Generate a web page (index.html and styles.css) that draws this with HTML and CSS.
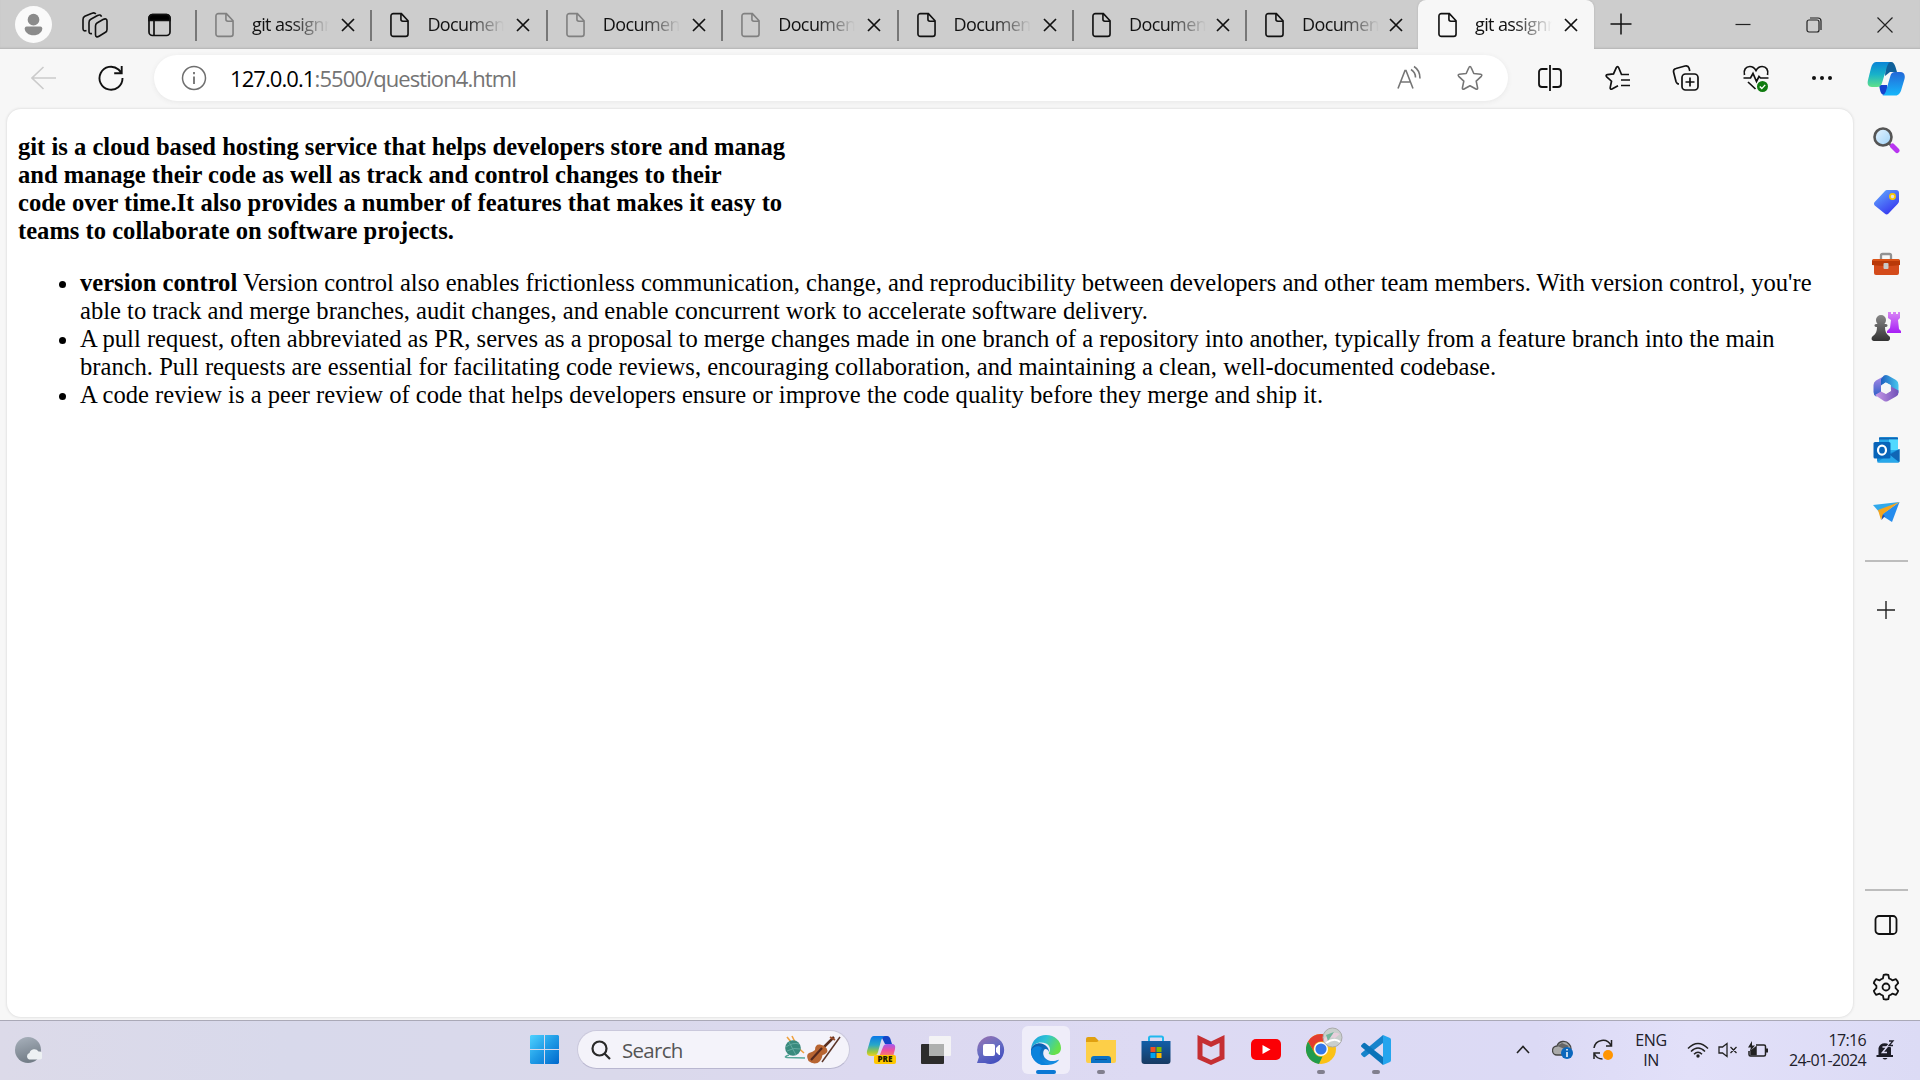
FILE: index.html
```html
<!DOCTYPE html>
<html lang="en">
<head>
<meta charset="utf-8">
<title>git assignment</title>
<link rel="stylesheet" href="styles.css">
</head>
<body>
<svg class="defs" width="0" height="0">
  <symbol id="doc" viewBox="0 0 20 26"><path d="M3.5 1H12l7 7.5v14a2.5 2.500 0 0 1-2.500 2.500h-13A2.500 2.500 0 0 1 1 22.500v-19A2.500 2.500 0 0 1 3.500 1zM11.500 1v6a2 2 0 0 0 2 2H19" fill="none" stroke="currentColor" stroke-width="1.700"/></symbol>
  <symbol id="x" viewBox="0 0 14 14"><path d="M1 1l12 12M13 1L1 13" fill="none" stroke="currentColor" stroke-width="1.700"/></symbol>
</svg>
<div class="desktop">
  <header class="tabstrip">
    <div class="lead">
      <div class="avatar"><svg width="37" height="37" viewBox="0 0 38 38"><circle cx="19" cy="14" r="6" fill="#8b8b8b"/><path d="M12 21h14a2 2 0 0 1 2 2c0 4-4 7-9 7s-9-3-9-7a2 2 0 0 1 2-2z" fill="#8b8b8b"/></svg></div>
      <svg class="workspaces" width="26" height="26" viewBox="0 0 26 26" fill="none" stroke="#111" stroke-width="1.600"><path d="M15 11l6-3.500c2.500-1.300 4-.5 4 1.500v8.500c0 1.500-.5 2.200-1.500 2.800l-6.500 4c-2 1.200-3.500.5-3.500-1.500V14c0-1.500.3-2.300 1.500-3z"/><path d="M10 21.500c-2 .5-3-.2-3-2v-9c0-1.500.5-2.500 1.800-3.200L15.500 3.500c2-1 3.500-.5 4 1.300"/><path d="M4.500 18.500C2.200 19.500 1 18.500 1 16.500V7.500C1 6 1.500 5 2.800 4.300L10 1.300c1.700-.8 3-.5 3.800.7"/></svg>
      <svg width="24" height="24" viewBox="0 0 24 24" fill="none" stroke="#111" stroke-width="1.700"><rect x="1" y="1.500" width="21" height="21" rx="3.500"/><path d="M1 5a4 4 0 0 1 3.500-3.500h14A4 4 0 0 1 22 5v2.500H1z" fill="#000"/><path d="M6 7v15"/></svg>
    </div>
    <div class="tab dim"><svg class="doc"><use href="#doc"/></svg><span>git assignment</span><svg class="close"><use href="#x"/></svg></div>
    <div class="tab"><svg class="doc"><use href="#doc"/></svg><span>Document</span><svg class="close"><use href="#x"/></svg></div>
    <div class="tab dim"><svg class="doc"><use href="#doc"/></svg><span>Document</span><svg class="close"><use href="#x"/></svg></div>
    <div class="tab dim"><svg class="doc"><use href="#doc"/></svg><span>Document</span><svg class="close"><use href="#x"/></svg></div>
    <div class="tab"><svg class="doc"><use href="#doc"/></svg><span>Document</span><svg class="close"><use href="#x"/></svg></div>
    <div class="tab narrow"><svg class="doc"><use href="#doc"/></svg><span>Document</span><svg class="close"><use href="#x"/></svg></div>
    <div class="tab narrow"><svg class="doc"><use href="#doc"/></svg><span>Document</span><svg class="close"><use href="#x"/></svg></div>
    <div class="tab active"><svg class="doc"><use href="#doc"/></svg><span>git assignment</span><svg class="close"><use href="#x"/></svg></div>
    <svg class="newtab" width="22" height="22" viewBox="0 0 22 22"><path d="M11 0.500v21M0.500 11h21" stroke="#111" stroke-width="1.500"/></svg>
    <div class="winctl">
      <div><svg width="16" height="16"><path d="M0.500 7.500h15" stroke="#222" stroke-width="1.200"/></svg></div>
      <div><svg width="16" height="16" fill="none" stroke="#222" stroke-width="1.200"><rect x="1" y="3" width="12" height="12" rx="2"/><path d="M4 1h8c2 0 3 1 3 3v9"/></svg></div>
      <div><svg width="16" height="16" viewBox="0 0 16 16"><path d="M.5 .5l15 15M15.500 .5l-15 15" stroke="#222" stroke-width="1.200"/></svg></div>
    </div>
  </header>

  <nav class="toolbar">
    <svg class="back" width="26" height="24" viewBox="0 0 26 24" fill="none" stroke="#cbcbcb" stroke-width="1.600"><path d="M25 12H1M12.500 1L1 12l11.500 11"/></svg>
    <svg class="reload" width="26" height="26" viewBox="0 0 26 26" fill="none" stroke="#111" stroke-width="1.900"><path d="M24.500 13A11.500 11.500 0 1 1 20.500 4.500L23.700 8M23.700 1v7.200h-7.500"/></svg>
    <div class="address">
      <svg width="26" height="26" viewBox="0 0 26 26" fill="none" stroke="#6f6f6f" stroke-width="1.500"><circle cx="13" cy="13" r="11.500"/><path d="M13 11.500V19M13 7v2.200" stroke-width="1.800"/></svg>
      <span class="url"><b>127.0.0.1</b>:5500/question4.html</span>
      <svg class="read" width="26" height="26" viewBox="0 0 26 26" fill="none" stroke="#757575" stroke-width="1.600"><path d="M1 23.500L8 5.500h1l7 18M4 17h9.500M14 4.500c3 1.800 4.500 4.500 4.500 8M17 1.500c4 2.500 6 6.500 6 12"/></svg>
      <svg width="26" height="26" viewBox="0 0 26 26" fill="none" stroke="#757575" stroke-width="1.600" stroke-linejoin="round"><path d="M13 1.500c.6 0 .9.500 1.100 1l2.700 6 6.900.8c1.200.2 1.400 1.200.6 2l-5.100 4.800 1.400 6.700c.2 1.200-.7 1.800-1.700 1.200L13 20.800 7.100 24c-1 .6-1.900 0-1.700-1.200l1.400-6.700-5.100-4.800c-.8-.8-.6-1.800.6-2l6.900-.8 2.700-6c.2-.5.500-1 1.100-1z"/></svg>
    </div>
    <div class="tools">
      <svg width="26" height="26" viewBox="0 0 26 26" fill="none" stroke="#111" stroke-width="1.800"><path d="M10.500 4H5a3 3 0 0 0-3 3v12a3 3 0 0 0 3 3h5.500M15.500 4H21a3 3 0 0 1 3 3v12a3 3 0 0 1-3 3h-5.500M13 0v26"/></svg>
      <svg width="26" height="26" viewBox="0 0 26 26" fill="none" stroke="#111" stroke-width="1.700"><path d="M24 9.500h-7.500l-2.800-6.800c-.6-1.400-1.800-1.400-2.400 0L8.500 8.900l-6.200.8c-1.300.2-1.600 1.200-.6 2.200l4.800 4.300-1.300 6.500c-.2 1.300.7 1.900 1.800 1.300L13 20.800M16 15h9M16 20.500h9"/></svg>
      <svg width="28" height="28" viewBox="0 0 28 28" fill="none" stroke="#111" stroke-width="1.700"><rect x="10" y="10" width="16" height="16" rx="3.500"/><path d="M18 13.500v9M13.500 18h9M7 20c-1.800 0-2.500-1-3-2.500L1.700 8.500C1.200 6.500 2 5 4 4.500l9-2.500c2-.5 3.500.3 4 2l.8 3"/></svg>
      <svg width="28" height="28" viewBox="0 0 28 28" fill="none" stroke="#111" stroke-width="1.700"><path d="M2.500 11C1.200 5.500 4 2.500 7.800 2.500c2.700 0 4.800 1.500 6.200 4 1.400-2.500 3.500-4 6.200-4 3.800 0 6.600 3 5.300 8.500M1.500 14h7L11 9.500l3.500 8 2.500-5 1.500 1.500h8M6 18l7.500 7"/><circle cx="20.500" cy="22.500" r="5.500" fill="#107c10" stroke="none"/><path d="M17.800 22.600l2 2 3.400-3.700" stroke="#fff" stroke-width="1.400"/></svg>
      <svg width="22" height="6" viewBox="0 0 22 6" fill="#111"><circle cx="3" cy="3" r="2"/><circle cx="11" cy="3" r="2"/><circle cx="19" cy="3" r="2"/></svg>
    </div>
    <svg class="copilot" width="38" height="35" viewBox="0 0 38 35">
      <defs><linearGradient id="ca" x1="0" y1="0" x2="0" y2="1"><stop offset="0" stop-color="#0a84d6"/><stop offset=".5" stop-color="#18b2c9"/><stop offset="1" stop-color="#5fe08a"/></linearGradient><linearGradient id="cb" x1="0" y1="0" x2="0" y2="1"><stop offset="0" stop-color="#2368d8"/><stop offset="1" stop-color="#16b7fb"/></linearGradient></defs>
      <path d="M19 1h5c2.500 0 3.500 2 4.500 5l1.500 5h-7l-5 4z" fill="#10609a"/>
      <path d="M12 24h8l1 10h-3c-3 0-4.500-2-5-5z" fill="#1443ce"/>
      <path d="M9 1h14c-2 1-3 4-4 8l-4 13c-.6 2-2 4-5 4H5c-4 0-5-3-4-7L4 7c1-3.500 2.500-6 5-6z" fill="url(#ca)"/>
      <path d="M28 11h5c4 0 5.500 3 4.500 7l-3 10c-1 4-3 6.500-6 6.500H15c3-.5 4-4 5-8l3.500-12c.7-2 2-3.500 4.500-3.500z" fill="url(#cb)"/>
    </svg>
  </nav>

  <div class="body">
    <main class="page">
      <p class="intro">git is a cloud based hosting service that helps developers store and manag<br>and manage their code as well as track and control changes to their<br>code over time.It also provides a number of features that makes it easy to<br>teams to collaborate on software projects.</p>
      <ul>
        <li><b>version control</b> Version control also enables frictionless communication, change, and reproducibility between developers and other team members. With version control, you're<br>able to track and merge branches, audit changes, and enable concurrent work to accelerate software delivery.</li>
        <li>A pull request, often abbreviated as PR, serves as a proposal to merge changes made in one branch of a repository into another, typically from a feature branch into the main<br>branch. Pull requests are essential for facilitating code reviews, encouraging collaboration, and maintaining a clean, well-documented codebase.</li>
        <li>A code review is a peer review of code that helps developers ensure or improve the code quality before they merge and ship it.</li>
      </ul>
    </main>
    <aside class="sidebar">
      <div><svg width="28" height="28" viewBox="0 0 28 28"><defs><linearGradient id="lens" x2="1" y2="1"><stop stop-color="#e6f4ff"/><stop offset="1" stop-color="#9ed2f8"/></linearGradient></defs><path d="M16 17l4 3" stroke="#666" stroke-width="2.500"/><path d="M20.500 20l4.500 4.500" stroke="#b836f0" stroke-width="5" stroke-linecap="round"/><circle cx="11" cy="11" r="8.500" fill="url(#lens)" stroke="#555" stroke-width="2.600"/></svg></div>
      <div><svg width="28" height="28" viewBox="0 0 28 28"><defs><linearGradient id="tag" x2=".7" y2="1"><stop stop-color="#65b0ff"/><stop offset="1" stop-color="#3535ef"/></linearGradient></defs><path d="M15 2h9c2 0 3 1 3 3v8c0 1-.5 2-1.200 2.700l-9.500 10c-1 1-2.400 1-3.300 0L2.700 17.500c-1-1-1-2.400 0-3.400L13 3c.6-.7 1.200-1 2-1z" fill="url(#tag)"/><circle cx="20.500" cy="8.500" r="2.600" fill="#dde" stroke="#fac800" stroke-width="1.700"/></svg></div>
      <div><svg width="30" height="26" viewBox="0 0 30 26"><path d="M10 8V4.500Q10 3 11.500 3h7Q20 3 20 4.500V8" fill="none" stroke="#929292" stroke-width="2.300"/><path d="M3 12h25v10q0 2-2 2H5q-2 0-2-2z" fill="#d44b1b"/><path d="M3 8h24q2 0 2 2v4q-13 2-28 0v-4q0-2 2-2z" fill="#b93908"/><path d="M2 9h26" stroke="#e75d1c" stroke-width="1.500"/><rect x="12.500" y="12" width="5" height="6" rx="1" fill="#c9c9c9"/></svg></div>
      <div><svg width="30" height="30" viewBox="0 0 30 30"><defs><linearGradient id="rook" x2="0" y2="1"><stop stop-color="#d886f5"/><stop offset="1" stop-color="#a61df5"/></linearGradient><linearGradient id="pawn" x2="0" y2="1"><stop stop-color="#888"/><stop offset="1" stop-color="#333"/></linearGradient></defs><path d="M17 1h3v2h2V1h3v2h2V1h2v6l-2 2 1 9 2 2v2H16v-2l3-3 1-8-3-2z" fill="url(#rook)"/><path d="M5 9a5 5 0 1 1 10 0c0 2-1 3-1.500 4H15c2 0 2 3 0 3h-1c0 4 1 7 4 9 2 1 1 5-1 5H3c-3 0-3-4-1-5 3-2 4-5 4-9H5c-2 0-2-3 0-3h1.500C6 12 5 11 5 9z" fill="url(#pawn)"/></svg></div>
      <div><svg width="28" height="28" viewBox="0 0 28 28"><defs><linearGradient id="m1" x2="1" y2="0"><stop stop-color="#1e5fc0"/><stop offset="1" stop-color="#48c8ee"/></linearGradient><linearGradient id="m2" x2="0" y2="1"><stop stop-color="#b68be8"/><stop offset="1" stop-color="#2c60c8"/></linearGradient><linearGradient id="m3" x2="1" y2="0"><stop stop-color="#c99ae8"/><stop offset="1" stop-color="#7050b8"/></linearGradient></defs><path d="M14 1L4 6.500Q1.500 8 1.500 11v7q0 3 2.500 4.500L9 20V9z" fill="url(#m2)"/><path d="M12 1.500Q14 .3 16 1.500L24 6q2.500 1.500 2.500 5v8l-8-4v-4L13.500 8.500 9 12V5z" fill="url(#m1)"/><path d="M3 21l6-3.500 5 2.500 5-3v-4.500l7.500 4v2q0 3-2.500 4l-8 4.500q-2 1-4 0z" fill="url(#m3)"/><path d="M14 8.500l4.800 2.700v5.600L14 19.500l-4.800-2.700v-5.600z" fill="#f7f7f7"/></svg></div>
      <div><svg width="28" height="28" viewBox="0 0 28 28"><rect x="7" y="1" width="19" height="17" rx="1.500" fill="#28a8ea"/><path d="M7 2.500h19" stroke="#1264b4" stroke-width="2"/><path d="M17 3.500h9V14h-9z" fill="#50d9ff"/><path d="M5 14l11 4 11.500-5v12q0 1.500-1.500 1.500H7q-2 0-2-2z" fill="#148edb"/><path d="M17 19l10.500-6v13z" fill="#1066b5"/><path d="M5 26.500h22L17 18z" fill="#28a8ea"/><rect x="1.500" y="6" width="17" height="16.500" rx="1.500" fill="#0864b9"/><ellipse cx="10" cy="14.200" rx="4" ry="4.500" fill="none" stroke="#fff" stroke-width="2.200"/></svg></div>
      <div><svg width="28" height="22" viewBox="0 0 28 22"><path d="M1 4L27.500 1 8 12z" fill="#31a9eb"/><path d="M27.500 1L20 21 9 14z" fill="#258ced"/><path d="M10 13l3 2-3.500 4z" fill="#1d4eb0"/><path d="M27.500 1L6 9l3 10 2-6z" fill="#f5a51c"/></svg></div>
      <hr>
      <div class="add"><svg width="20" height="20"><path d="M10 1v18M1 10h18" stroke="#222" stroke-width="1.400"/></svg></div>
      <hr class="low">
      <div><svg width="24" height="22" viewBox="0 0 24 22" fill="none" stroke="#111" stroke-width="1.800"><rect x="1.500" y="2" width="21" height="18" rx="3.500"/><path d="M16 2v18"/></svg></div>
      <div><svg width="28" height="28" viewBox="0 0 28 28" fill="none" stroke="#111" stroke-width="1.800" stroke-linejoin="round"><path d="M11.700 1.800q2.300-.6 4.600 0l.8 3.700q2 .6 3.300 1.900l3.500-1.200q1.700 1.700 2.300 4L23.600 12.800v2.400l2.600 2.600q-.6 2.300-2.300 4l-3.500-1.200q-1.300 1.300-3.300 1.900l-.8 3.700q-2.300.6-4.600 0l-.8-3.700q-2-.6-3.300-1.900l-3.500 1.200q-1.700-1.700-2.300-4l2.600-2.600v-2.400L1.800 10.200q.6-2.300 2.300-4l3.500 1.200q1.300-1.300 3.300-1.900z"/><circle cx="14" cy="14" r="3.500"/></svg></div>
    </aside>
  </div>

  <footer class="taskbar">
    <svg class="weather" width="28" height="28" viewBox="0 0 28 28"><defs><linearGradient id="moon" x2=".3" y2="1"><stop stop-color="#a9b2bd"/><stop offset="1" stop-color="#747e88"/></linearGradient></defs><circle cx="14" cy="14" r="13" fill="url(#moon)"/><path d="M15 23.500a3.500 3.500 0 0 1 .5-6.500 5 5 0 0 1 9-1.500 4 4 0 0 1 1 8z" fill="#edf1f3"/></svg>
    <svg class="start" width="29" height="29" viewBox="0 0 29 29"><defs><linearGradient id="win" gradientUnits="userSpaceOnUse" x1="0" y1="0" x2="29" y2="29"><stop stop-color="#4fd2ff"/><stop offset=".5" stop-color="#1f9be6"/><stop offset="1" stop-color="#0068cc"/></linearGradient></defs><path d="M1 0h13v14H0V1zM15 0h13l1 1v13H15zM0 15h14v14H1l-1-1zM15 15h14v13l-1 1H15z" fill="url(#win)"/></svg>
    <div class="search">
      <svg width="20" height="20" viewBox="0 0 20 20" fill="none" stroke="#292929" stroke-width="2.200"><circle cx="8.500" cy="8.500" r="7"/><path d="M13.500 13.500l5.500 5.500"/></svg>
      <span>Search</span>
      <svg width="58" height="30" viewBox="0 0 58 30"><path d="M3 2l9 11M8 1l6 12M20 18l-9-8" stroke="#efa13e" stroke-width="1.600"/><circle cx="9" cy="13" r="7.800" fill="#398a7d"/><path d="M2 12q7-5 13-3M3 16q7-4 13-2M5 7l7 13" stroke="#64aaa0" fill="none"/><path d="M5 20q-6 2-2 2.500l18 .5" stroke="#58a89a" stroke-width="1.500" fill="none"/><path d="M56 2L38 27" stroke="#5b3427" stroke-width="1.500"/><path d="M38 14L50 2" stroke="#5a2f1f" stroke-width="2.500"/><path d="M25 18q4-1 6-3 0-6 5-5.500 7 1.500 7.500 6.500-1 3-5 4-1 6-5 8-5 1.500-9-2-3-6 .5-8z" fill="#b86532"/><path d="M27 25l11-12" stroke="#56281d" stroke-width="2.200"/><path d="M46 2l5 3" stroke="#9c4e2b" stroke-width="2"/></svg>
    </div>
    <div class="apps">
      <div><svg width="30" height="30" viewBox="0 0 30 30"><defs><linearGradient id="pa" x2="0" y2="1"><stop stop-color="#0a78e8"/><stop offset=".45" stop-color="#28a8c8"/><stop offset=".8" stop-color="#a0c83c"/><stop offset="1" stop-color="#f0d020"/></linearGradient><linearGradient id="pb" x2="0" y2="1"><stop stop-color="#a05af0"/><stop offset=".5" stop-color="#f0509c"/><stop offset="1" stop-color="#f98b5a"/></linearGradient></defs><path d="M15 1h6q3 0 4 5l1 3h-7z" fill="#1445c8"/><path d="M8 1h11q-3 1-4 5l-3 11q-1 4-5 4H5q-5 0-4-5L4 6q1-5 4-5z" fill="url(#pa)"/><path d="M21 9h5q4 0 3 5l-2 8H12q2-1 3-5l2-5q1-3 4-3z" fill="url(#pb)"/><rect x="8" y="20" width="22" height="9" rx="2" fill="#ffc800"/><text x="19" y="27.300" text-anchor="middle" font-size="8" font-weight="800" font-family="Open Sans, sans-serif" fill="#221a00">PRE</text></svg></div>
      <div><svg width="30" height="30" viewBox="0 0 30 30"><rect x="0" y="9" width="23" height="20" rx="1" fill="#2c2c2c"/><rect x="8" y="1" width="22" height="20" rx="1" fill="#f5f5f5" opacity=".9"/><path d="M8 9h15v12H8z" fill="#aeb0af"/></svg></div>
      <div><svg width="30" height="30" viewBox="0 0 30 30"><defs><linearGradient id="chat" x2=".5" y2="1"><stop stop-color="#9c70ad"/><stop offset=".5" stop-color="#6b6fc2"/><stop offset="1" stop-color="#4651bf"/></linearGradient></defs><path d="M15 1a14 14 0 1 1-6 27H1l2-6A14 14 0 0 1 15 1z" fill="url(#chat)"/><rect x="7" y="9" width="12" height="12" rx="2" fill="#fff"/><path d="M20 13l3-3h1v10h-1l-3-3z" fill="#fff"/></svg></div>
      <div class="current"><svg width="30" height="30" viewBox="0 0 30 30"><defs><linearGradient id="eg" x2="1" y2=".4"><stop stop-color="#1899dc"/><stop offset=".5" stop-color="#2fc3d4"/><stop offset="1" stop-color="#66e04c"/></linearGradient><linearGradient id="eb" x2=".3" y2="1"><stop stop-color="#0b5aa8"/><stop offset="1" stop-color="#158be0"/></linearGradient></defs><path d="M0 14C1 5 7 0 15 0c9 0 15 6 15 13 0 5-4 7-8 7-3 0-5-1-4-2.500 2-3 1-7-3-9C9 6 3 8 0 14z" fill="url(#eg)"/><path d="M0 14C2 9 8 7 12 9c4 1.500 6 5 6 8-1-3-4-4-5-2-3 6 3 12 10 11 3-.3 5-2 5-1-3 4-8 5-13 5C6 30-1 23 0 14z" fill="url(#eb)"/><path d="M11 13c-4 5-3 13 6 17-9 2-17-5-17-14 2-5 8-6 11-3z" fill="#0a82dc"/></svg></div>
      <div class="open"><svg width="30" height="30" viewBox="0 0 30 30"><path d="M0 4q0-2 2-2h7l4 4v4H0z" fill="#e0a010"/><path d="M0 7h11l3-2h16v21q0 2-2 2H2q-2 0-2-2z" fill="#fdcf48"/><path d="M5 28v-4q0-3 3-3h14q3 0 3 3v4z" fill="#0b72c5"/><path d="M9 24.500h12" stroke="#0a4e91"/></svg></div>
      <div><svg width="30" height="30" viewBox="0 0 30 30"><defs><linearGradient id="store" x2="0" y2="1"><stop stop-color="#125fa8"/><stop offset="1" stop-color="#173a62"/></linearGradient></defs><path d="M8 7V3q0-1.500 1.500-1.500h11Q22 1.500 22 3v4" fill="none" stroke="#21b8ee" stroke-width="2"/><path d="M.5 6h29v20q0 3-3 3h-23q-3 0-3-3z" fill="url(#store)"/><path d="M9.500 12h5v5h-5z" fill="#f25022"/><path d="M15.500 12h5v5h-5z" fill="#7fba00"/><path d="M9.500 18h5v5h-5z" fill="#00a4ef"/><path d="M15.500 18h5v5h-5z" fill="#ffb900"/></svg></div>
      <div><svg width="28" height="30" viewBox="0 0 28 30"><path d="M.5 0L14 6.500 27.500 0v24L14 30 .5 24zM5.500 8v13l8.500 4 8.500-4V8L14 12z" fill="#c52f32" fill-rule="evenodd"/></svg></div>
      <div><svg width="30" height="30" viewBox="0 0 30 30"><rect x="0" y="4" width="30" height="21" rx="5" fill="#fb0005"/><path d="M11.500 10v9l8-4.500z" fill="#fff"/></svg></div>
      <div class="open"><svg class="chrome" width="38" height="38" viewBox="0 -7 38 38"><circle cx="15" cy="15" r="15" fill="#fbc116"/><path d="M15 0a15 15 0 0 1 13 7.500H15a7.500 7.500 0 0 0-6.500 11.250L2 7.500A15 15 0 0 1 15 0z" fill="#e33b2e"/><path d="M2 7.500l6.500 11.250A7.500 7.500 0 0 0 16.500 22.500L13 30A15 15 0 0 1 2 7.500z" fill="#229b4c"/><circle cx="15" cy="15" r="7" fill="#fff"/><circle cx="15" cy="15" r="5.600" fill="#3478e8"/><circle cx="26.500" cy="3.500" r="9.500" fill="#c9cfcd" stroke="#aaa"/><path d="M18 5q7-9 16-5l-5 4q-7-2-10 6z" fill="#e8cfdc"/><path d="M20 1l8-3-6 9z" fill="#6fb59b"/><path d="M20 9q9-6 14-1" stroke="#fff" stroke-width="2" fill="none"/></svg></div>
      <div class="open"><svg width="30" height="30" viewBox="0 0 30 30"><path d="M22 0l7 3q1 .5 1 2v20q0 1.500-1 2l-7 3z" fill="#24a5ee"/><path d="M22 0v8L4 22q-1 .5-2-.5L.5 20q-1-1 0-2z" fill="#1683cb"/><path d="M22 30v-8L4 8q-1-.5-2 .5L.5 10q-1 1 0 2z" fill="#0b73b9"/></svg></div>
    </div>
    <div class="tray">
      <svg class="chev" width="14" height="9" viewBox="0 0 14 9" fill="none" stroke="#222" stroke-width="1.600"><path d="M1 8l6-6.500L13 8"/></svg>
      <svg class="cloud" width="22" height="20" viewBox="0 0 22 20"><path d="M5 15a4.500 4.500 0 0 1 0-9 7 7 0 0 1 12-2q2 2 2 5l-6 6z" fill="#aaa" stroke="#444" stroke-width="1.300"/><path d="M5 6l5-3 7 3-4 3z" fill="#666"/><circle cx="15" cy="13" r="6" fill="#0b67bd"/><path d="M15 12v5M15 9v1.600" stroke="#fff" stroke-width="1.500"/></svg>
      <svg class="sync" width="22" height="22" viewBox="0 0 22 22" fill="none" stroke="#222" stroke-width="1.500"><path d="M2 9A9 9 0 0 1 19 6.500M19.500 1v6H14M2 20v-6h6M2.500 15q2.500 5 8 5"/><circle cx="16" cy="16" r="5" fill="#ff9500" stroke="none"/></svg>
      <div class="lang">ENG<br>IN</div>
      <svg class="wifi" width="22" height="16" viewBox="0 0 22 16" fill="none" stroke="#222" stroke-width="1.500"><path d="M1 6.500q10-10 20 0M4 9.500q7-7 14 0M7 12.300q4-4 8 0"/><circle cx="11" cy="14" r="1.700" fill="#222" stroke="none"/></svg>
      <svg class="sound" width="20" height="16" viewBox="0 0 20 16" fill="none" stroke="#222" stroke-width="1.300"><path d="M1 5h3.500L9 1.500v13L4.500 11H1zM12.500 5l6 6M18.500 5l-6 6"/></svg>
      <svg class="battery" width="22" height="18" viewBox="0 0 22 18" fill="none" stroke="#222" stroke-width="1.500"><path d="M9 4h8q1.500 0 1.500 1.500v8q0 1.500-1.500 1.500H3.500Q2 15 2 13.500V10"/><path d="M20 7.500v4" stroke-width="2"/><path d="M4 13.500V10l5-4v7.500z" fill="#222"/><path d="M5 0L1 6.500h3L2.500 11 8 4.500H5z" fill="#222" stroke="none"/></svg>
      <div class="clock">17:16<br>24-01-2024</div>
      <svg class="bell" width="20" height="20" viewBox="0 0 20 20"><path d="M2.500 15V8a6.500 6.500 0 0 1 12.500 0v7h2v2H.5v-2zM6.500 18h5q-2.500 3-5 0z" fill="#1d1d28"/><path d="M12.500 1h4.500l-4 4.500h4" fill="none" stroke="#dedcf5" stroke-width="3"/><path d="M6.500 7h4.500l-4.500 5.500h4.500" fill="none" stroke="#dedcf5" stroke-width="1.500"/><path d="M13 1h4l-4 4.500h4" fill="none" stroke="#1d1d28" stroke-width="1.300"/></svg>
    </div>
  </footer>
</div>
</body>
</html>
```

FILE: styles.css
```css
* { box-sizing: border-box; }
body { margin: 0; width: 1920px; height: 1080px; overflow: hidden; background: #f7f7f7; font-family: "Open Sans", sans-serif; }
svg { display: block; flex: none; }
.defs { position: absolute; }
.desktop { display: flex; flex-direction: column; height: 1080px; }

.tabstrip { display: flex; align-items: center; height: 49px; flex: none; background: #cdcdcd; box-shadow: inset 0 -2px 2px -1px #b3b3b3; }
.lead { display: flex; align-items: center; width: 195px; padding-left: 15px; }
.avatar { width: 37px; height: 37px; border-radius: 50%; background: #fafafa; overflow: hidden; }
.workspaces { margin: 0 40px 0 30px; }
.tab { display: flex; align-items: center; width: 175.400px; height: 49px; padding-left: 20px; color: #111; flex: none; background: linear-gradient(#777, #777) 0 10px / 2px 31px no-repeat; }
.tab.narrow { width: 173px; }
.tab .doc { width: 19px; height: 26px; }
.tab.dim .doc { color: #808080; }
.tab span { width: 77px; margin: -1px 12px 0 18px; overflow: hidden; white-space: nowrap; font-size: 18px; line-height: 24px; letter-spacing: -0.600px; -webkit-mask-image: linear-gradient(90deg, #000 50%, transparent 100%); mask-image: linear-gradient(90deg, #000 50%, transparent 100%); }
.tab .close { width: 14px; height: 14px; margin-top: 1px; }
.tab.narrow span { margin-right: 10px; }
.tab.active { width: 176px; background: #f7f7f7; border-radius: 8px 8px 0 0; box-shadow: 0 0 2px #aaa; clip-path: inset(0 -3px 0 -3px); }
.newtab { margin: -1px 0 0 16px; }
.winctl { display: flex; margin-left: auto; }
.winctl div { width: 71px; display: flex; justify-content: center; }

.toolbar { display: flex; align-items: center; height: 59px; flex: none; padding: 0 0 1px 31px; background: #f7f7f7; }
.reload { margin: 0 43px 0 41px; }
.address { display: flex; align-items: center; width: 1354px; height: 46px; margin-left: -13px; padding: 0 25px 0 27px; border-radius: 23px; background: #fff; box-shadow: 0 1px 5px #e7e7e7; }
.url { flex: 1; margin-left: 23px; font-size: 22px; line-height: 30px; letter-spacing: -0.920px; color: #747474; }
.url b { font-weight: 400; color: #000; }
.read { margin-right: 34px; }
.tools { display: flex; align-items: center; justify-content: space-between; width: 296px; margin-left: 29px; }
.copilot { margin-left: 34px; }

.body { display: flex; flex: 1; min-height: 0; }
.page { width: 1846px; height: 908px; margin: 1px 0 0 7px; background: #fff; border-radius: 14px; box-shadow: 0 0 3px #cfcfcf; padding: 24px 0 0 11px; font-family: "Liberation Serif", serif; font-size: 24.590px; line-height: 28px; color: #000; white-space: nowrap; }
.intro { margin: 0; font-weight: 700; }
.page ul { margin: 24px 0 0; padding-left: 62px; }
.sidebar { display: flex; flex-direction: column; align-items: center; width: 66px; padding: 1px 0 2px; }
.sidebar div { height: 62px; display: flex; align-items: center; }
.sidebar hr { width: 43px; height: 2px; margin: 17px 0; border: 0; background: #bdbdbd; flex: none; }
.sidebar hr.low { margin: auto 0 3px; }

.taskbar { display: flex; align-items: center; height: 60px; flex: none; border-top: 1px solid #aaa9b7; padding: 0 0 2px 14px; background: linear-gradient(90deg, #dcdae9 0, #d8d9eb 15%, #dad9eb 32%, #dcd9f0 45%, #dddaf3 60%, #dcdaf5 80%, #e2e0f9 88%, #dcdbf5 100%); }
.start { margin: 0 18px 0 488px; }
.search { display: flex; align-items: center; width: 273px; height: 39px; padding: 0 7px 0 13px; border-radius: 20px; background: #f4f3fa; border: 1px solid #cac8dc; border-bottom-color: #b9b7d0; }
.search span { flex: 1; margin-left: 11px; font-size: 20.500px; line-height: 28px; letter-spacing: -0.700px; color: #555; }
.apps { display: flex; margin-left: 3px; }
.apps div { position: relative; display: flex; align-items: center; justify-content: center; width: 48px; height: 48px; margin: 0 3.500px; border-radius: 6px; }
.apps .current { background: #efedf9; }
.apps .open::after, .apps .current::after { content: ""; position: absolute; left: 20px; bottom: 0; width: 8px; height: 4px; border-radius: 2px; background: #817f8e; }
.apps .current::after { left: 14px; width: 20px; background: #0b78d4; }
.chrome { margin: -7px -8px 0 0; }
.tray { display: flex; align-items: center; margin-left: auto; padding-right: 24px; color: #20202a; font-size: 16px; line-height: 20px; }
.cloud { margin: 0 18px 0 22px; }
.lang { width: 50px; margin: 0 11px 0 12px; text-align: center; letter-spacing: -0.400px; }
.sound { margin: 0 9px 0 9px; }
.clock { width: 90px; margin-left: 7px; text-align: right; letter-spacing: -0.650px; }
.bell { margin-left: 10px; }
```
